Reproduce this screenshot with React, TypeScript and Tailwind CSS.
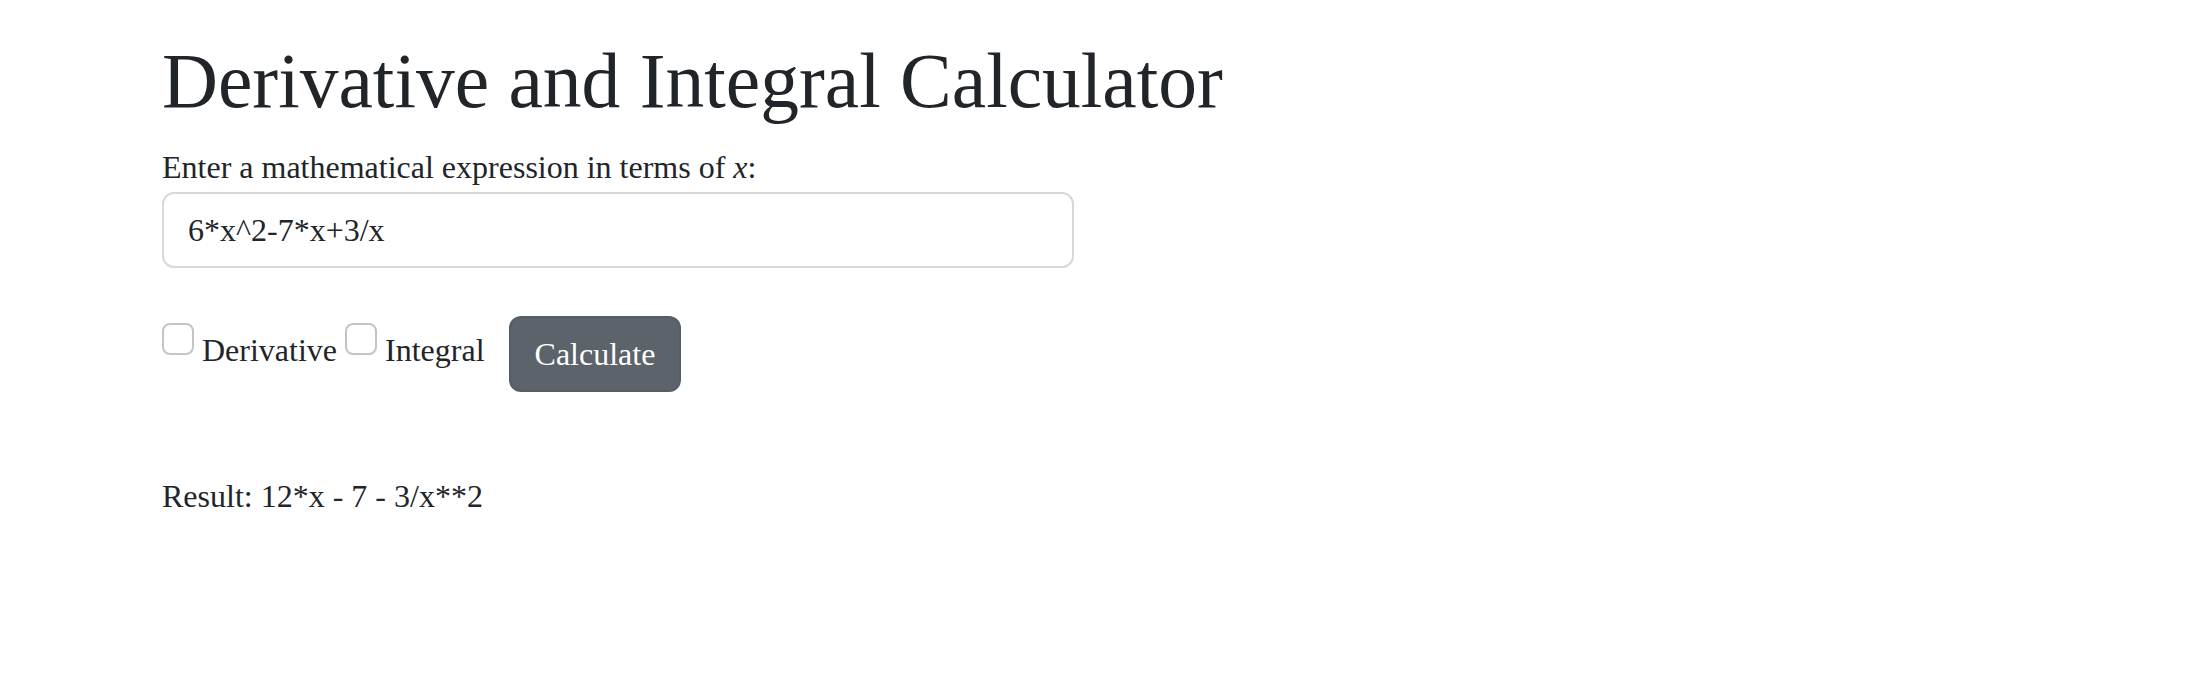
import React, { useState } from "react";

export default function App() {
  const [expr, setExpr] = useState("6*x^2-7*x+3/x");

  return (
    <div className="min-h-screen bg-white text-[#212529] font-['Liberation_Serif',_'Times_New_Roman',_serif]">
      <div className="pl-[162px] pt-[35px]">
        {/* Title */}
        <h1 className="text-[77.5px] leading-[92px] font-normal mb-[16px]">
          Derivative and Integral Calculator
        </h1>

        {/* Expression input */}
        <div className="w-[912px]">
          <label className="block text-[32px] leading-[48px] mb-[1px]">
            Enter a mathematical expression in terms of <i>x</i>:
          </label>
          <input
            type="text"
            value={expr}
            onChange={(e) => setExpr(e.target.value)}
            className="block w-full h-[76px] px-[24px] border-2 border-[#d6d9dc] rounded-[12px] text-[32px] leading-[48px] text-[#212529] outline-none font-['Liberation_Serif',_'Times_New_Roman',_serif]"
          />
        </div>

        {/* Options row */}
        <div className="flex items-start mt-[48px]">
          <input
            type="checkbox"
            className="appearance-none w-[32px] h-[32px] mt-[7px] border-2 border-[#c4c4c4] rounded-[8px] bg-white"
          />
          <span className="ml-[8px] mt-[10px] text-[32px] leading-[48px]">Derivative</span>
          <input
            type="checkbox"
            className="appearance-none w-[32px] h-[32px] mt-[7px] ml-[8px] border-2 border-[#c4c4c4] rounded-[8px] bg-white"
          />
          <span className="ml-[8px] mt-[10px] text-[32px] leading-[48px]">Integral</span>
          <button className="ml-[24px] h-[76px] px-[24px] bg-[#5c636a] border-2 border-[#565e64] rounded-[12px] text-white text-[32px] leading-[48px]">
            Calculate
          </button>
        </div>

        {/* Result */}
        <p className="mt-[80px] text-[32px] leading-[48px]">Result: 12*x - 7 - 3/x**2</p>
      </div>
    </div>
  );
}
